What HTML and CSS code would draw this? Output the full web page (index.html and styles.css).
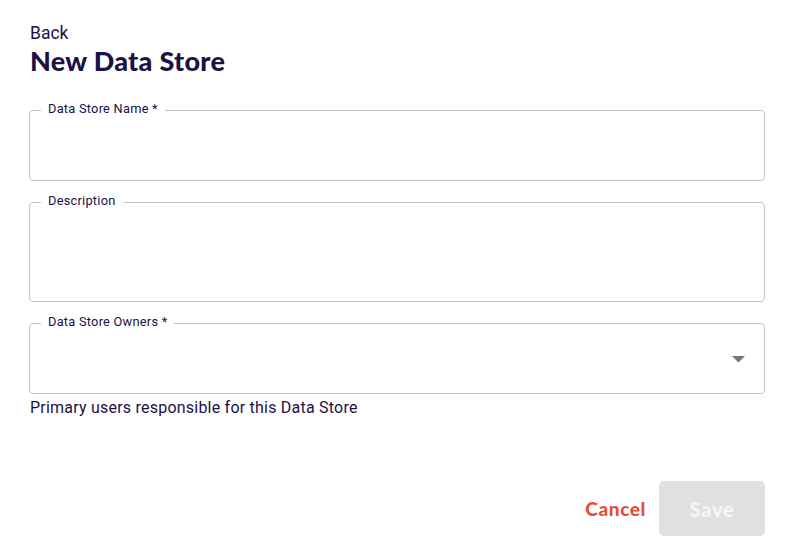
FILE: index.html
```html
<!DOCTYPE html>
<html lang="en">
<head>
<meta charset="utf-8">
<title>New Data Store</title>
<link rel="stylesheet" href="styles.css">
</head>
<body>
<main class="page">
  <a class="back" href="#">Back</a>
  <h1 class="title">New Data Store</h1>
  <form class="form">
    <div class="field field-short">
      <span class="field-label">Data Store Name *</span>
    </div>
    <div class="field field-tall">
      <span class="field-label">Description</span>
    </div>
    <div class="field-group">
      <div class="field field-short field-select">
        <span class="field-label">Data Store Owners *</span>
        <svg class="select-arrow" width="13" height="7" viewBox="0 0 13 7" aria-hidden="true"><polygon points="0,0 13,0 6.5,6.5" fill="#757575"/></svg>
      </div>
      <p class="helper">Primary users responsible for this Data Store</p>
    </div>
    <div class="actions">
      <button type="button" class="btn-cancel">Cancel</button>
      <button type="button" class="btn-save" disabled>Save</button>
    </div>
  </form>
</main>
</body>
</html>
```
FILE: styles.css
```css
html, body {
  margin: 0;
  padding: 0;
  background: #ffffff;
}

.page {
  padding: 21px 29px 0 29px;
  font-family: Roboto, "Liberation Sans", sans-serif;
  color: #1b1145;
}

.back {
  display: block;
  font-size: 17.5px;
  line-height: 24px;
  color: #1b1145;
  text-decoration: none;
  padding-left: 1px;
}

.title {
  margin: 0;
  padding-left: 1px;
  font-family: Lato, "Liberation Sans", sans-serif;
  font-weight: 900;
  font-size: 27px;
  line-height: 32px;
  letter-spacing: 0.3px;
  color: #1b1145;
}

.form {
  display: flex;
  flex-direction: column;
  gap: 21px;
  margin-top: 33px;
}

.field {
  position: relative;
  box-sizing: border-box;
  border: 1px solid #c4c4c4;
  border-radius: 4px;
}

.field-short { height: 71px; }
.field-tall { height: 100px; }

.field-label {
  position: absolute;
  top: -11px;
  left: 11px;
  padding: 0 7px 0 7px;
  background: #ffffff;
  font-size: 12.8px;
  line-height: 17px;
  letter-spacing: 0.25px;
  color: #1b1145;
}

.field-select {
  display: flex;
  align-items: center;
  justify-content: flex-end;
  padding-right: 19px;
}

.select-arrow {
  display: block;
  margin-top: 1px;
}

.helper {
  margin: 2px 0 0 1px;
  font-size: 16px;
  line-height: 24px;
  letter-spacing: 0.22px;
  color: #1b1145;
}

.actions {
  display: flex;
  justify-content: flex-end;
  align-items: center;
  gap: 13px;
  margin-top: 40px;
}

.btn-cancel,
.btn-save {
  font-family: Lato, "Liberation Sans", sans-serif;
  font-weight: 900;
  font-size: 19px;
  border: none;
  cursor: pointer;
}

.btn-cancel {
  background: none;
  padding: 0;
  color: #e0503c;
  letter-spacing: 0.6px;
}

.btn-save {
  width: 106px;
  height: 55px;
  border-radius: 5px;
  background: #e0e0e0;
  color: #f6f6f6;
  font-size: 20px;
  letter-spacing: 0.8px;
}
```
